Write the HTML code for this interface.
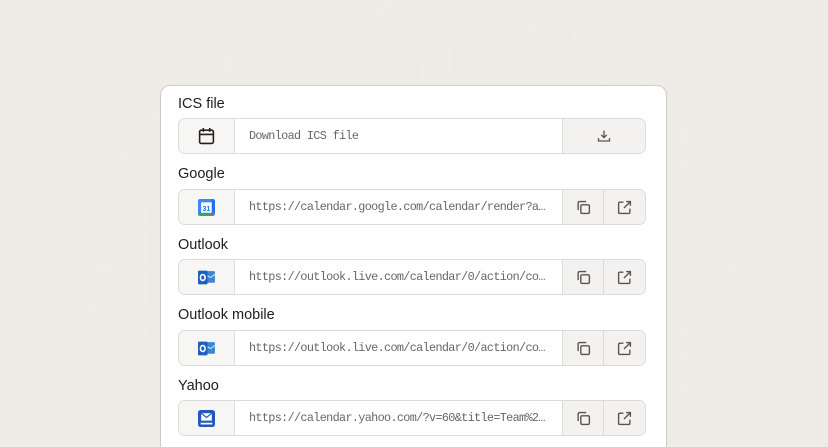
<!DOCTYPE html>
<html><head><style>
html,body{margin:0;padding:0;height:447px;overflow:hidden}
body{width:828px;background:#efece7;position:relative;font-family:"Liberation Sans",sans-serif}
.grid{position:absolute;inset:0;background-image:linear-gradient(#e9e6e1 1px,transparent 1px),linear-gradient(90deg,#e9e6e1 1px,transparent 1px);background-size:38px 38px;background-position:-2px 0;-webkit-mask-image:radial-gradient(ellipse 380px 300px at 414px 260px,#000 40%,transparent 100%);mask-image:radial-gradient(ellipse 380px 300px at 414px 260px,#000 40%,transparent 100%)}
.card{position:absolute;left:160px;top:85px;width:507px;height:370px;background:#fff;border:1px solid #cfcbc6;border-radius:10px;box-sizing:border-box}
.lbl{position:absolute;left:17px;font-size:14.5px;color:#1d1d1d}
.row{position:absolute;left:17px;width:468px;height:36px;border:1px solid #dcdad6;border-radius:7px;box-sizing:border-box;display:flex;overflow:hidden;background:#fff}
.ic{width:55px;flex:none;border-right:1px solid #e2e0dc;background:#f7f6f4;display:flex;align-items:center;justify-content:center}
.tx{flex:1;min-width:0;display:block;line-height:35px;padding:0 12px 0 14px;font-family:"Liberation Mono",monospace;font-size:11.8px;letter-spacing:-0.65px;color:#666;white-space:nowrap;overflow:hidden;text-overflow:ellipsis}
.b{width:40px;flex:none;border-left:1px solid #dcdad6;background:#f3f2f0;display:flex;align-items:center;justify-content:center}
.b.w{width:82px}
</style></head><body>
<div class="grid"></div>
<div class="card">
<div class="lbl" style="top:10px">ICS file</div>
<div class="row" style="top:32px"><div class="ic"><svg width="17" height="18" viewBox="0 0 16 17" fill="none" stroke="#222" stroke-width="1.5"><rect x="1.5" y="3" width="13" height="12.5" rx="1.5"/><path d="M1.5 7h13M5 1v3.5M11 1v3.5"/></svg></div><div class="tx">Download ICS file</div><div class="b w"><svg width="14" height="14" viewBox="0 0 14 14" fill="none" stroke="#555" stroke-width="1.3"><path d="M7 1.5v7M4.2 5.8 7 8.6l2.8-2.8M1.5 9v3h11V9"/></svg></div></div>
<div class="lbl" style="top:80px">Google</div>
<div class="row" style="top:103px"><div class="ic"><svg width="17" height="17" viewBox="0 0 16 16"><rect x="0" y="0" width="16" height="16" rx="2" fill="#4285f4"/><rect x="3" y="3" width="10" height="10" fill="#fff"/><path d="M13 0h1a2 2 0 0 1 2 2v11h-3z" fill="#1a73e8"/><path d="M0 13h13v3H2a2 2 0 0 1-2-2z" fill="#34a853"/><path d="M13 13h3l-3 3z" fill="#ea4335"/><path d="M0 3V2a2 2 0 0 1 2-2h11v3z" fill="#4285f4"/><text x="8" y="11.3" font-size="6.5" text-anchor="middle" fill="#1a73e8" font-family="Liberation Sans" font-weight="bold">31</text></svg></div><div class="tx">https://calendar.google.com/calendar/render?action=TEMPLATE</div><div class="b"><svg width="15" height="15" viewBox="0 0 14 14" fill="none" stroke="#555" stroke-width="1.3"><rect x="4.5" y="4.5" width="8" height="8" rx="1.2"/><path d="M2 9.5V2.8A1.3 1.3 0 0 1 3.3 1.5H9.5"/></svg></div><div class="b" style="width:41px"><svg width="15" height="15" viewBox="0 0 14 14" fill="none" stroke="#555" stroke-width="1.3"><path d="M6 2H2.5a1 1 0 0 0-1 1v8.5a1 1 0 0 0 1 1H11a1 1 0 0 0 1-1V8M8.5 1.5h4v4M12.5 1.5 6.5 7.5"/></svg></div></div>
<div class="lbl" style="top:151px">Outlook</div>
<div class="row" style="top:173px"><div class="ic"><svg width="18" height="17" viewBox="0 0 17 16"><rect x="5" y="2" width="11" height="11" rx="1" fill="#3a86d9"/><path d="M8 6l4 2 4-3" stroke="#cfe4fa" fill="none"/><rect x="0" y="1.5" width="9" height="13" rx="1" fill="#1d5fbf"/><ellipse cx="4.5" cy="8" rx="2.2" ry="2.8" fill="none" stroke="#fff" stroke-width="1.5"/></svg></div><div class="tx">https://outlook.live.com/calendar/0/action/compose?allday</div><div class="b"><svg width="15" height="15" viewBox="0 0 14 14" fill="none" stroke="#555" stroke-width="1.3"><rect x="4.5" y="4.5" width="8" height="8" rx="1.2"/><path d="M2 9.5V2.8A1.3 1.3 0 0 1 3.3 1.5H9.5"/></svg></div><div class="b" style="width:41px"><svg width="15" height="15" viewBox="0 0 14 14" fill="none" stroke="#555" stroke-width="1.3"><path d="M6 2H2.5a1 1 0 0 0-1 1v8.5a1 1 0 0 0 1 1H11a1 1 0 0 0 1-1V8M8.5 1.5h4v4M12.5 1.5 6.5 7.5"/></svg></div></div>
<div class="lbl" style="top:221px">Outlook mobile</div>
<div class="row" style="top:244px"><div class="ic"><svg width="18" height="17" viewBox="0 0 17 16"><rect x="5" y="2" width="11" height="11" rx="1" fill="#3a86d9"/><path d="M8 6l4 2 4-3" stroke="#cfe4fa" fill="none"/><rect x="0" y="1.5" width="9" height="13" rx="1" fill="#1d5fbf"/><ellipse cx="4.5" cy="8" rx="2.2" ry="2.8" fill="none" stroke="#fff" stroke-width="1.5"/></svg></div><div class="tx">https://outlook.live.com/calendar/0/action/compose?allday</div><div class="b"><svg width="15" height="15" viewBox="0 0 14 14" fill="none" stroke="#555" stroke-width="1.3"><rect x="4.5" y="4.5" width="8" height="8" rx="1.2"/><path d="M2 9.5V2.8A1.3 1.3 0 0 1 3.3 1.5H9.5"/></svg></div><div class="b" style="width:41px"><svg width="15" height="15" viewBox="0 0 14 14" fill="none" stroke="#555" stroke-width="1.3"><path d="M6 2H2.5a1 1 0 0 0-1 1v8.5a1 1 0 0 0 1 1H11a1 1 0 0 0 1-1V8M8.5 1.5h4v4M12.5 1.5 6.5 7.5"/></svg></div></div>
<div class="lbl" style="top:292px">Yahoo</div>
<div class="row" style="top:314px"><div class="ic"><svg width="17" height="17" viewBox="0 0 16 16"><rect x="0" y="0" width="16" height="16" rx="2.5" fill="#2458b8"/><rect x="3" y="3" width="10" height="7" fill="#fff"/><path d="M3 3l5 4 5-4" stroke="#2458b8" fill="none" stroke-width="1.2"/><rect x="2.5" y="12" width="11" height="1.6" fill="#fff"/></svg></div><div class="tx">https://calendar.yahoo.com/?v=60&amp;title=Team%20Meeting</div><div class="b"><svg width="15" height="15" viewBox="0 0 14 14" fill="none" stroke="#555" stroke-width="1.3"><rect x="4.5" y="4.5" width="8" height="8" rx="1.2"/><path d="M2 9.5V2.8A1.3 1.3 0 0 1 3.3 1.5H9.5"/></svg></div><div class="b" style="width:41px"><svg width="15" height="15" viewBox="0 0 14 14" fill="none" stroke="#555" stroke-width="1.3"><path d="M6 2H2.5a1 1 0 0 0-1 1v8.5a1 1 0 0 0 1 1H11a1 1 0 0 0 1-1V8M8.5 1.5h4v4M12.5 1.5 6.5 7.5"/></svg></div></div>
</div>
</body></html>
